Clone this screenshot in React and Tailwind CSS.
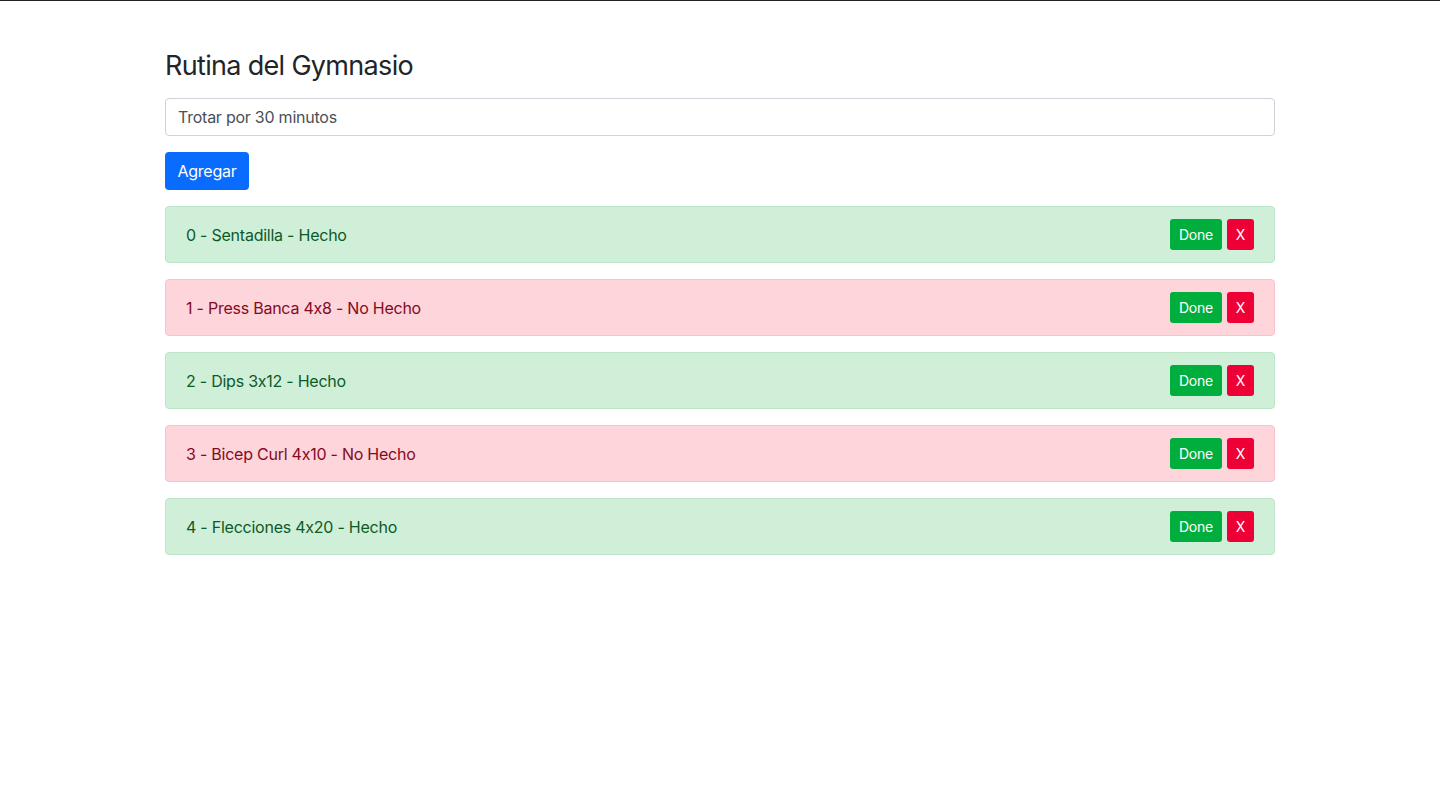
import { useState } from "react";

const initial = [
  { id: 0, name: "Sentadilla", done: true },
  { id: 1, name: "Press Banca 4x8", done: false },
  { id: 2, name: "Dips 3x12", done: true },
  { id: 3, name: "Bicep Curl 4x10", done: false },
  { id: 4, name: "Flecciones 4x20", done: true },
];

export default function App() {
  const [items, setItems] = useState(initial);
  const [text, setText] = useState("Trotar por 30 minutos");

  const add = () => {
    if (!text.trim()) return;
    setItems([...items, { id: items.length, name: text, done: false }]);
    setText("");
  };

  const toggle = (id) =>
    setItems(items.map((it) => (it.id === id ? { ...it, done: !it.done } : it)));

  const remove = (id) => setItems(items.filter((it) => it.id !== id));

  return (
    <div className="min-h-screen bg-white border-t border-[#222] font-['Inter','Liberation_Sans',sans-serif] [font-feature-settings:'calt'_0] tracking-[-0.015em]">
      <div className="w-[1110px] mx-auto pt-12">
        <h3 className="text-[27px] leading-[34px] font-normal text-[#212529] mb-[15px] tracking-[-0.025em]">
          Rutina del Gymnasio
        </h3>
        <input
          value={text}
          onChange={(e) => setText(e.target.value)}
          className="block w-full h-[38px] px-3 text-base text-[#495057] border border-[#ced4da] rounded-[4px] outline-none tracking-[-0.015em]"
        />
        <button
          onClick={add}
          className="mt-4 h-[38px] w-[84px] rounded-[4px] bg-[#0a6cff] text-white text-base"
        >
          Agregar
        </button>
        <div className="mt-4 flex flex-col gap-4">
          {items.map((it, i) => (
            <div
              key={it.id}
              className={
                "flex items-center justify-between px-5 py-3 border rounded-[4px] " +
                (it.done
                  ? "bg-[#cfefd9] border-[#bde6c9] text-[#0c5a27]"
                  : "bg-[#fdd5da] border-[#f8c4ca] text-[#85091f]")
              }
            >
              <span className="text-base">
                {i} - {it.name} - {it.done ? "Hecho" : "No Hecho"}
              </span>
              <div className="flex gap-[5px]">
                <button
                  onClick={() => toggle(it.id)}
                  className="h-[31px] w-[52px] rounded-[3px] bg-[#00ae3e] text-white text-sm"
                >
                  Done
                </button>
                <button
                  onClick={() => remove(it.id)}
                  className="h-[31px] w-[27px] rounded-[3px] bg-[#ee0036] text-white text-sm"
                >
                  X
                </button>
              </div>
            </div>
          ))}
        </div>
      </div>
    </div>
  );
}
